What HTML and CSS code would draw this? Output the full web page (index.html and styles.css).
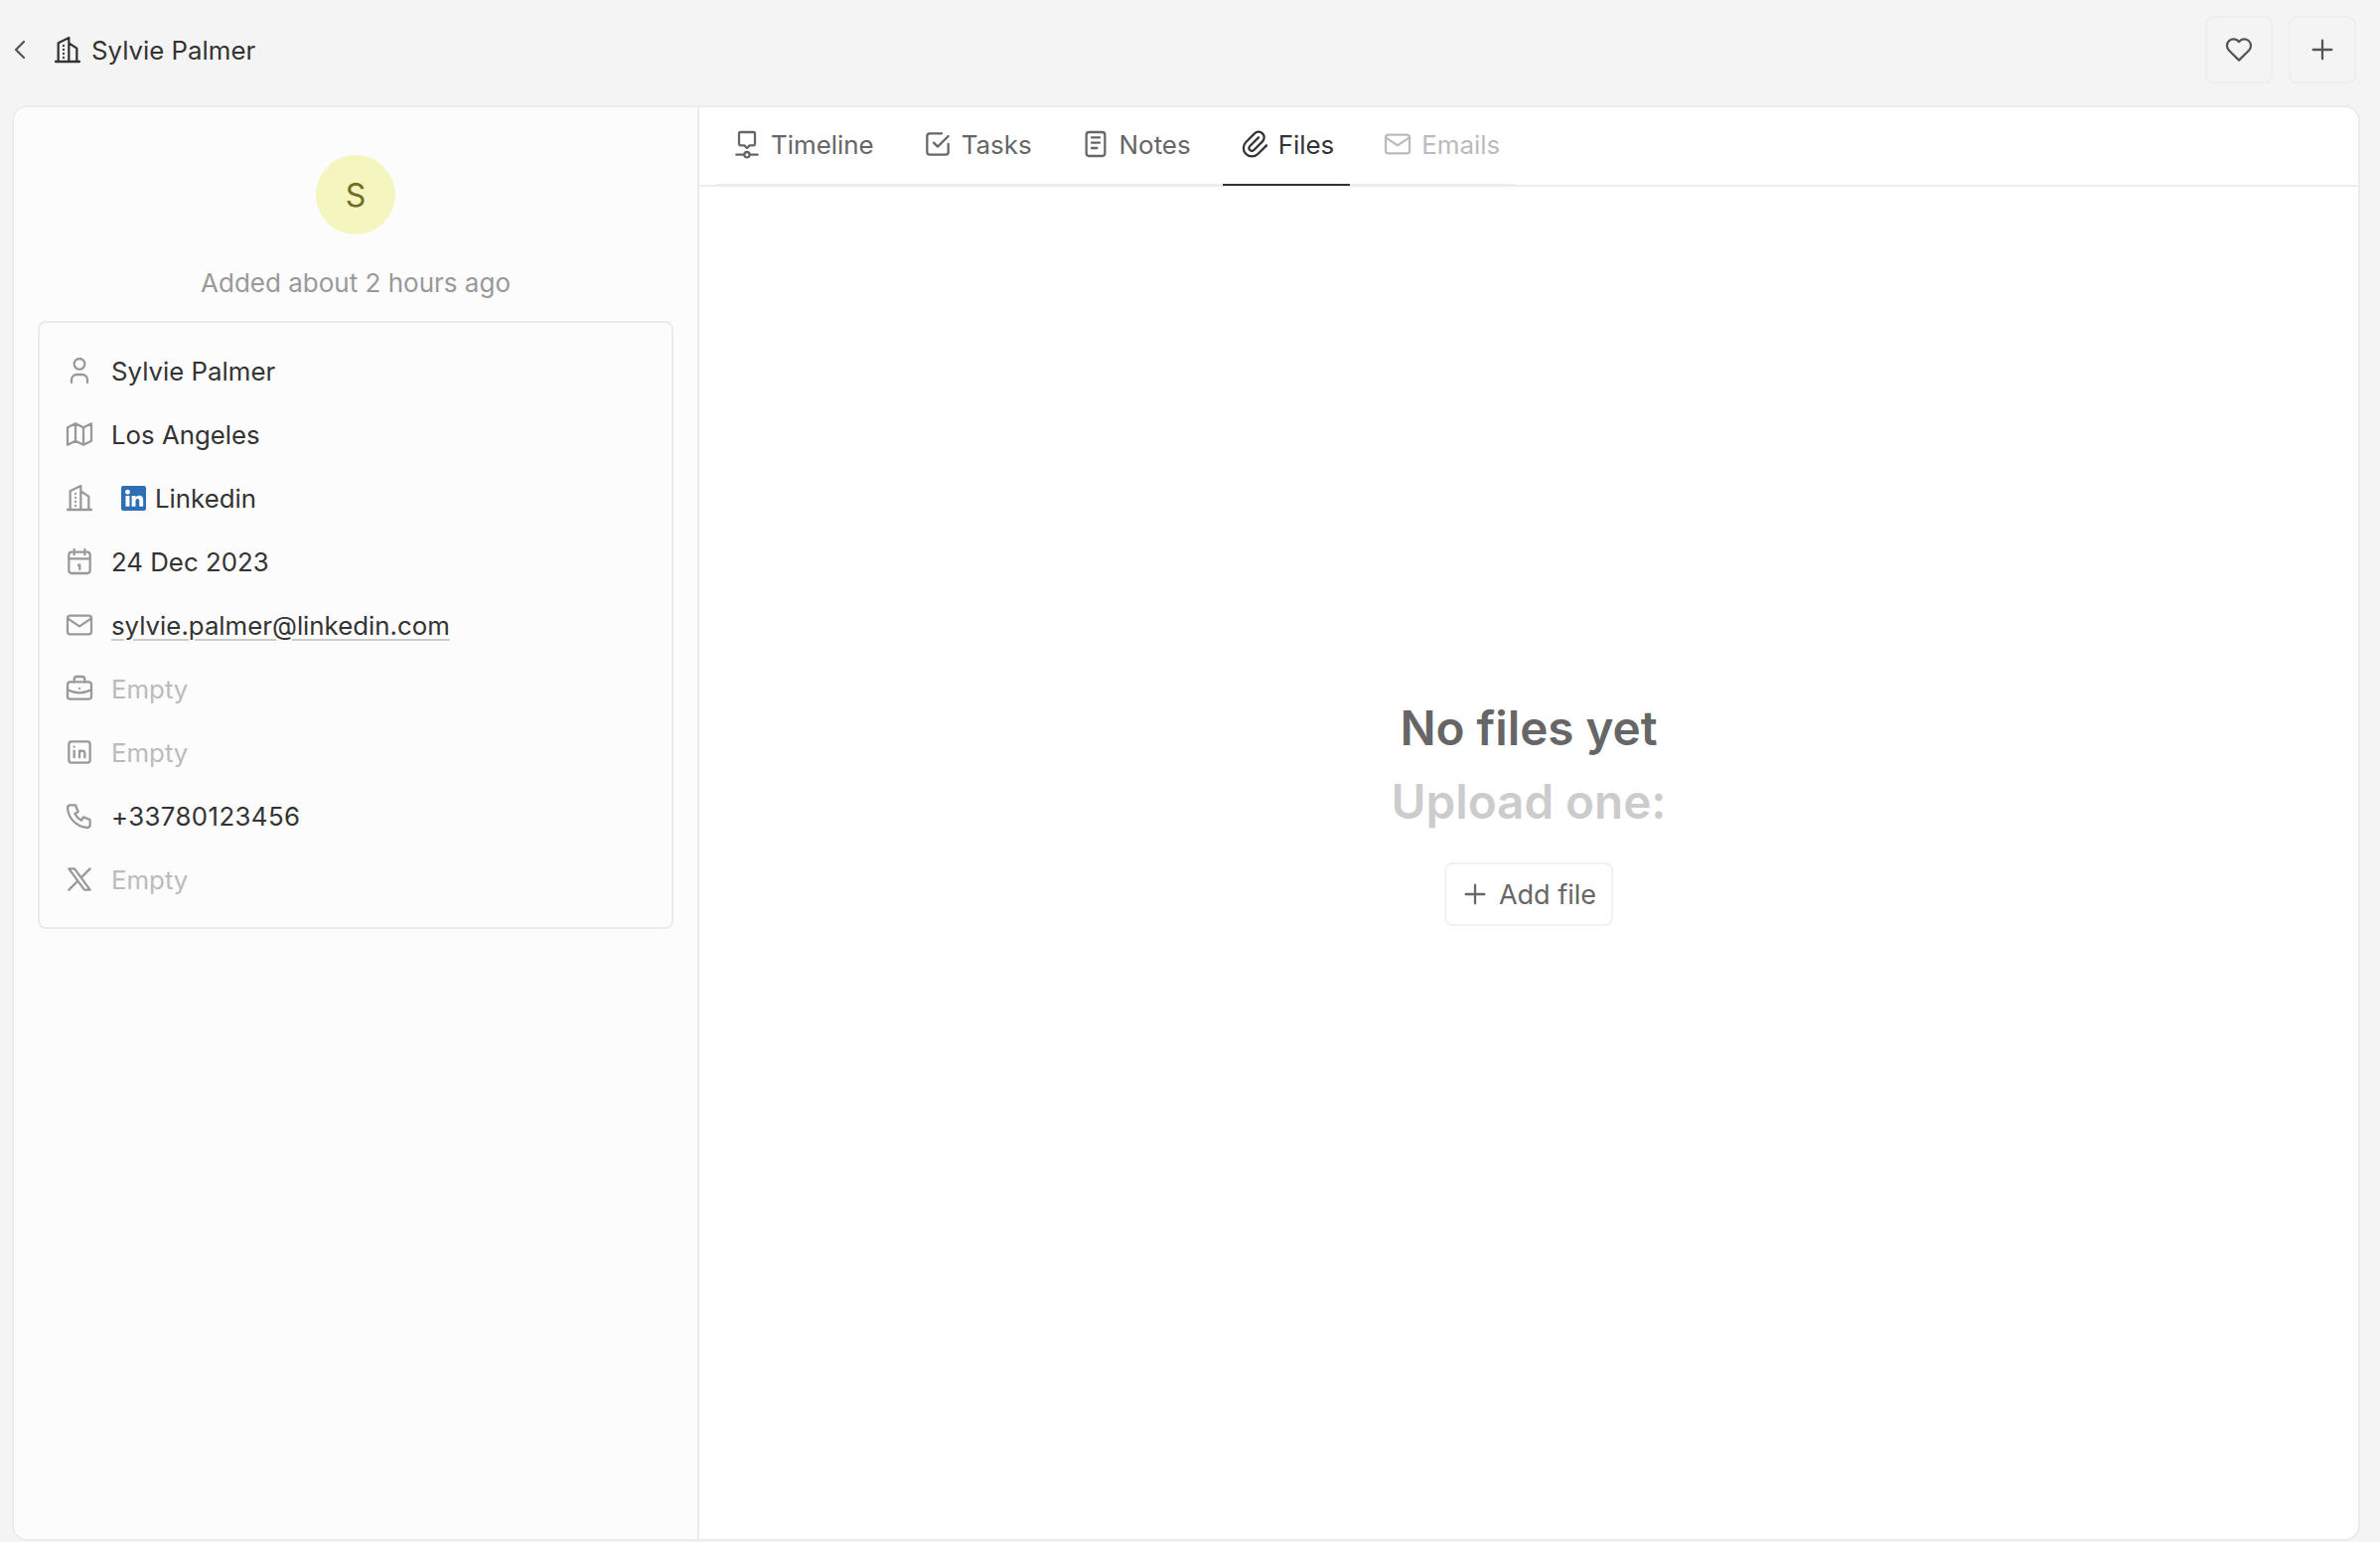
FILE: index.html
```html
<!DOCTYPE html>
<html lang="en">
<head>
  <meta charset="UTF-8">
  <title>Sylvie Palmer</title>
  <link rel="stylesheet" href="styles.css">
</head>
<body>

  <header class="topbar">
    <div class="crumb">
      <svg class="back" viewBox="0 0 24 24"><path d="M15 6l-6 6 6 6"/></svg>
      <svg class="crumb-icon" viewBox="0 0 24 24"><path d="M3 21h18M5 21V7l8-4v18M19 21V11l-6-4M9 9v.01M9 12v.01M9 15v.01M9 18v.01"/></svg>
      <span>Sylvie Palmer</span>
    </div>
    <div class="actions">
      <button class="icon-btn"><svg viewBox="0 0 24 24"><path d="M19.5 12.572L12 20l-7.500-7.428a5 5 0 1 1 7.500-6.566 5 5 0 1 1 7.500 6.572"/></svg></button>
      <button class="icon-btn"><svg viewBox="0 0 24 24"><path d="M12 5v14M5 12h14"/></svg></button>
    </div>
  </header>

  <main class="panel">
    <aside class="side">
      <div class="avatar">S</div>
      <p class="added">Added about 2 hours ago</p>

      <div class="card">
        <div class="row">
          <svg viewBox="0 0 24 24"><circle cx="12" cy="7" r="4"/><path d="M6 21v-2a4 4 0 0 1 4-4h4a4 4 0 0 1 4 4v2"/></svg>
          <span>Sylvie Palmer</span>
        </div>
        <div class="row">
          <svg viewBox="0 0 24 24"><path d="M3 7l6-3 6 3 6-3v13l-6 3-6-3-6 3zM9 4v13M15 7v13"/></svg>
          <span>Los Angeles</span>
        </div>
        <div class="row">
          <svg viewBox="0 0 24 24"><path d="M3 21h18M5 21V7l8-4v18M19 21V11l-6-4M9 9v.01M9 12v.01M9 15v.01M9 18v.01"/></svg>
          <span class="company">
            <svg class="logo" viewBox="0 0 24 24"><rect width="24" height="24" rx="2"/><circle class="logo-in" cx="6.200" cy="6" r="2.300"/><path class="logo-in" d="M4.300 9.600h3.800V20H4.300zM10.200 9.600h3.600v1.500c.6-1 1.800-1.800 3.500-1.800 3 0 4 1.900 4 4.800V20h-3.800v-5.200c0-1.400-.4-2.300-1.600-2.300-1.400 0-2 1-2 2.400V20h-3.700z"/></svg>
            Linkedin
          </span>
        </div>
        <div class="row">
          <svg viewBox="0 0 24 24"><rect x="4" y="5" width="16" height="16" rx="2"/><path d="M16 3v4M8 3v4M4 10h16M11.200 15l1-.5V18"/></svg>
          <span>24 Dec 2023</span>
        </div>
        <div class="row">
          <svg viewBox="0 0 24 24"><rect x="3" y="5" width="18" height="14" rx="2"/><path d="M3 7l9 6 9-6"/></svg>
          <span class="link">sylvie.palmer@linkedin.com</span>
        </div>
        <div class="row empty">
          <svg viewBox="0 0 24 24"><rect x="3" y="7" width="18" height="13" rx="2"/><path d="M8 7V5a2 2 0 0 1 2-2h4a2 2 0 0 1 2 2v2M12 12v.01M3 13a20 20 0 0 0 18 0"/></svg>
          <span>Empty</span>
        </div>
        <div class="row empty">
          <svg viewBox="0 0 24 24"><rect x="4" y="4" width="16" height="16" rx="2"/><path d="M8 11v5M8 8v.01M12 16v-5M16 16v-3a2 2 0 0 0-4 0"/></svg>
          <span>Empty</span>
        </div>
        <div class="row">
          <svg viewBox="0 0 24 24"><path d="M5 4h4l2 5-2.500 1.500a11 11 0 0 0 5 5l1.500-2.500 5 2v4a2 2 0 0 1-2 2A16 16 0 0 1 3 6a2 2 0 0 1 2-2"/></svg>
          <span class="phone">+33780123456</span>
        </div>
        <div class="row empty">
          <svg viewBox="0 0 24 24"><path d="M4 4l11.733 16H20L8.267 4zM4 20l6.768-6.768M13.228 10.772L20 4"/></svg>
          <span>Empty</span>
        </div>
      </div>
    </aside>

    <section class="content">
      <div class="tabs">
        <nav class="tab-list">
          <a class="tab">
            <svg viewBox="0 0 24 24"><circle cx="12" cy="20" r="2"/><path d="M10 20H4M14 20h6M12 15l-2-2H7a1 1 0 0 1-1-1V4a1 1 0 0 1 1-1h10a1 1 0 0 1 1 1v8a1 1 0 0 1-1 1h-3z"/></svg>
            Timeline
          </a>
          <a class="tab">
            <svg viewBox="0 0 24 24"><path d="M9 11l3 3 8-8"/><path d="M20 12v6a2 2 0 0 1-2 2H6a2 2 0 0 1-2-2V6a2 2 0 0 1 2-2h9"/></svg>
            Tasks
          </a>
          <a class="tab">
            <svg viewBox="0 0 24 24"><rect x="5" y="3" width="14" height="18" rx="2"/><path d="M9 7h6M9 11h6M9 15h4"/></svg>
            Notes
          </a>
          <a class="tab active">
            <svg viewBox="0 0 24 24"><path d="M15 7l-6.500 6.500a1.500 1.500 0 0 0 3 3L18 10a3 3 0 0 0-6-6l-6.500 6.500a4.500 4.500 0 0 0 9 9L21 13"/></svg>
            Files
          </a>
          <a class="tab disabled">
            <svg viewBox="0 0 24 24"><rect x="3" y="5" width="18" height="14" rx="2"/><path d="M3 7l9 6 9-6"/></svg>
            Emails
          </a>
        </nav>
      </div>

      <div class="placeholder">
        <h2>No files yet</h2>
        <h2 class="sub">Upload one:</h2>
        <button class="add-btn"><svg viewBox="0 0 24 24"><path d="M12 5v14M5 12h14"/></svg>Add file</button>
      </div>
    </section>
  </main>

</body>
</html>
```

FILE: styles.css
```css
* { box-sizing: border-box; }

html, body { height: 100%; }

body {
  margin: 0;
  background: #f4f4f4;
  color: #333;
  font-family: Inter, "Noto Sans", sans-serif;
  font-size: 25.8px;
  display: flex;
  flex-direction: column;
  overflow: hidden;
}

svg {
  width: 32px;
  height: 32px;
  fill: none;
  stroke: currentColor;
  stroke-width: 1.7;
  stroke-linecap: round;
  stroke-linejoin: round;
  flex: none;
}

/* top bar */
.topbar {
  height: 106px;
  flex: none;
  display: flex;
  align-items: center;
  justify-content: space-between;
  padding: 0 24px 6px 4px;
}

.crumb {
  display: flex;
  align-items: center;
}

.back { color: #555; }

.crumb-icon {
  margin-left: 16px;
  margin-right: 8px;
}

.actions {
  display: flex;
  gap: 16px;
}

.icon-btn {
  width: 68px;
  height: 68px;
  display: flex;
  align-items: center;
  justify-content: center;
  padding: 0;
  background: transparent;
  border: 2px solid #eee;
  border-radius: 8px;
  color: #555;
}

/* main panel */
.panel {
  flex: 1;
  display: flex;
  margin: 0 20px 1px 12px;
  min-height: 0;
  background: #fff;
  border: 2px solid #ebebeb;
  border-radius: 16px;
  overflow: hidden;
}

.side {
  width: 690px;
  flex: none;
  background: #fcfcfc;
  border-right: 2px solid #ebebeb;
  padding: 48px 24px 0 24px;
  display: flex;
  flex-direction: column;
  align-items: center;
}

.avatar {
  width: 80px;
  height: 80px;
  border-radius: 50%;
  background: #f5f5c0;
  color: #6f6f24;
  font-size: 32px;
  display: flex;
  align-items: center;
  justify-content: center;
}

.added {
  margin: 29px 0 18px;
  color: #999;
  font-size: 26px;
  line-height: 40px;
}

.card {
  width: 100%;
  padding: 16px 0;
  border: 2px solid #ebebeb;
  border-radius: 8px;
}

.row {
  height: 64px;
  display: flex;
  align-items: center;
  gap: 16px;
  padding-left: 24px;
}

.row > svg { color: #999; }

.empty { color: #bbb; }

.company {
  display: flex;
  align-items: center;
  gap: 9px;
  margin-left: 10px;
}

.logo {
  width: 25px;
  height: 25px;
  fill: #2d6fb5;
  stroke: none;
}

.logo-in { fill: #fff; }

.link {
  text-decoration: underline;
  text-decoration-color: #ccc;
  text-decoration-thickness: 2px;
  text-underline-offset: 4px;
}

.phone { letter-spacing: .4px; }

/* tabs */
.content {
  flex: 1;
  min-width: 0;
  display: flex;
  flex-direction: column;
}

.tabs {
  height: 80px;
  flex: none;
  padding-left: 16px;
  border-bottom: 2px solid #ededed;
}

.tab-list {
  height: 79px;
  display: inline-flex;
  gap: 16px;
  border-bottom: 2px solid #ededed;
}

.tab {
  display: flex;
  align-items: center;
  gap: 8px;
  padding: 0 16px 3px;
  color: #666;
  font-size: 25.9px;
  margin-bottom: -2px;
  border-bottom: 2px solid transparent;
}

.tab.active {
  color: #333;
  border-bottom-color: #333;
}

.tab.disabled { color: #bbb; }

/* empty state */
.placeholder {
  flex: 1;
  display: flex;
  flex-direction: column;
  align-items: center;
  justify-content: center;
  padding-bottom: 109px;
}

.placeholder h2 {
  margin: 0;
  font-size: 47.6px;
  font-weight: 600;
  line-height: 74px;
  color: #666;
}

.placeholder .sub {
  color: #ccc;
  margin-bottom: 24px;
}

.add-btn {
  height: 64px;
  display: flex;
  align-items: center;
  gap: 8px;
  padding: 0 15px 0 13px;
  background: #fff;
  border: 2px solid #f1f1f1;
  border-radius: 8px;
  color: #666;
  font-family: inherit;
  font-size: 27px;
}
```
